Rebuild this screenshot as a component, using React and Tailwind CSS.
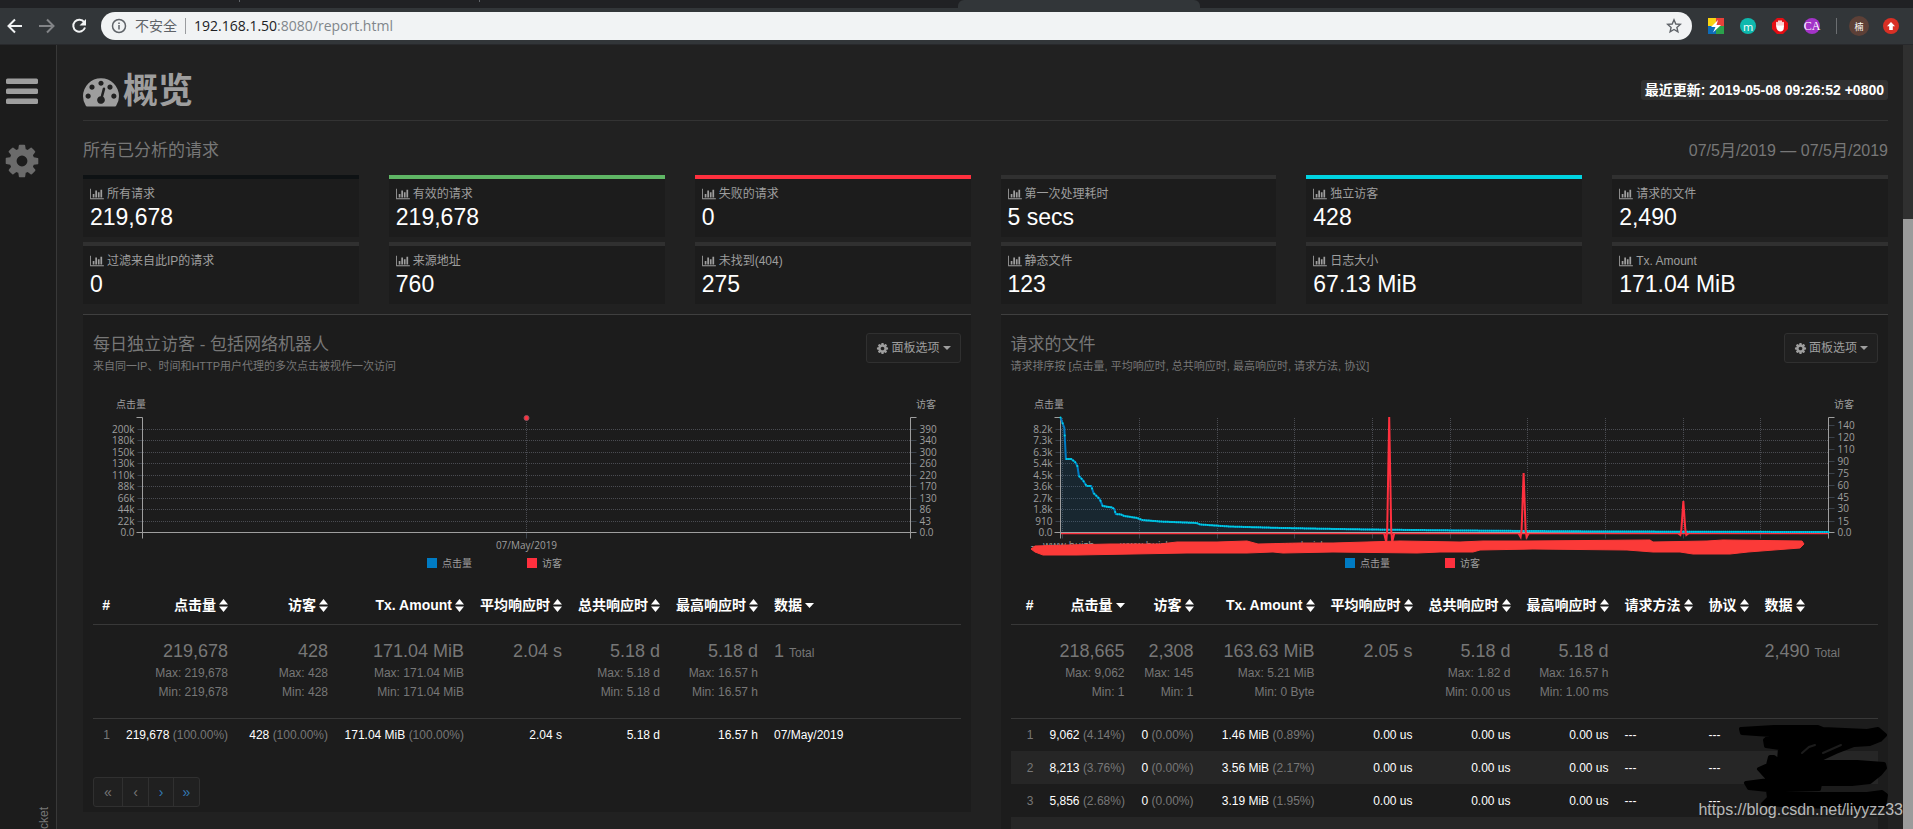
import { useEffect, useRef, useState } from 'react'

const STATS = [
  { label: '所有请求', value: '219,678', border: 'border-[#0e1214]' },
  { label: '有效的请求', value: '219,678', border: 'border-[#5fb665]' },
  { label: '失败的请求', value: '0', border: 'border-[#ff303e]' },
  { label: '第一次处理耗时', value: '5 secs', border: 'border-[#303030]' },
  { label: '独立访客', value: '428', border: 'border-[#00d4e1]' },
  { label: '请求的文件', value: '2,490', border: 'border-[#303030]' },
  { label: '过滤来自此IP的请求', value: '0', border: 'border-[#303030]' },
  { label: '来源地址', value: '760', border: 'border-[#303030]' },
  { label: '未找到(404)', value: '275', border: 'border-[#303030]' },
  { label: '静态文件', value: '123', border: 'border-[#303030]' },
  { label: '日志大小', value: '67.13 MiB', border: 'border-[#303030]' },
  { label: 'Tx. Amount', value: '171.04 MiB', border: 'border-[#303030]' },
]

const VISITORS_COLS = [
  { label: '#', width: 'w-[25px]' },
  { label: '点击量', width: 'w-[118px]', sort: 'both' },
  { label: '访客', width: 'w-[100px]', sort: 'both' },
  { label: 'Tx. Amount', width: 'w-[136px]', sort: 'both' },
  { label: '平均响应时', width: 'w-[98px]', sort: 'both' },
  { label: '总共响应时', width: 'w-[98px]', sort: 'both' },
  { label: '最高响应时', width: 'w-[98px]', sort: 'both' },
  { label: '数据', sort: 'desc', left: true },
]
const VISITORS_META = [
  null,
  ['219,678', 'Max: 219,678', 'Min: 219,678'],
  ['428', 'Max: 428', 'Min: 428'],
  ['171.04 MiB', 'Max: 171.04 MiB', 'Min: 171.04 MiB'],
  ['2.04 s'],
  ['5.18 d', 'Max: 5.18 d', 'Min: 5.18 d'],
  ['5.18 d', 'Max: 16.57 h', 'Min: 16.57 h'],
  { total: '1' },
]
const VISITORS_ROWS = [
  ['1', ['219,678', '(100.00%)'], ['428', '(100.00%)'], ['171.04 MiB', '(100.00%)'], ['2.04 s'], ['5.18 d'], ['16.57 h'], ['07/May/2019']],
]

const FILES_COLS = [
  { label: '#', width: 'w-[31px]' },
  { label: '点击量', width: 'w-[91px]', sort: 'desc' },
  { label: '访客', width: 'w-[69px]', sort: 'both' },
  { label: 'Tx. Amount', width: 'w-[121px]', sort: 'both' },
  { label: '平均响应时', width: 'w-[98px]', sort: 'both' },
  { label: '总共响应时', width: 'w-[98px]', sort: 'both' },
  { label: '最高响应时', width: 'w-[98px]', sort: 'both' },
  { label: '请求方法', width: 'w-[84px]', sort: 'both', left: true },
  { label: '协议', width: 'w-[56px]', sort: 'both', left: true },
  { label: '数据', sort: 'both', left: true },
]
const FILES_META = [
  null,
  ['218,665', 'Max: 9,062', 'Min: 1'],
  ['2,308', 'Max: 145', 'Min: 1'],
  ['163.63 MiB', 'Max: 5.21 MiB', 'Min: 0 Byte'],
  ['2.05 s'],
  ['5.18 d', 'Max: 1.82 d', 'Min: 0.00 us'],
  ['5.18 d', 'Max: 16.57 h', 'Min: 1.00 ms'],
  null,
  null,
  { total: '2,490' },
]
const FILES_ROWS = [
  ['1', ['9,062', '(4.14%)'], ['0', '(0.00%)'], ['1.46 MiB', '(0.89%)'], ['0.00 us'], ['0.00 us'], ['0.00 us'], ['---'], ['---'], ['']],
  ['2', ['8,213', '(3.76%)'], ['0', '(0.00%)'], ['3.56 MiB', '(2.17%)'], ['0.00 us'], ['0.00 us'], ['0.00 us'], ['---'], ['---'], ['']],
  ['3', ['5,856', '(2.68%)'], ['0', '(0.00%)'], ['3.19 MiB', '(1.95%)'], ['0.00 us'], ['0.00 us'], ['0.00 us'], ['---'], ['---'], ['']],
  ['', [''], [''], [''], [''], [''], [''], [''], [''], ['']],
]

// Chart geometry, shared by both panels
const TOP = 27.5
const BOTTOM = 142.5
const GRID_Y = [39.5, 50.5, 62.5, 73.5, 85.5, 96.5, 108.5, 119.5, 131.5]

const VISITORS_CHART = {
  left: ['200k', '180k', '150k', '130k', '110k', '88k', '66k', '44k', '22k'],
  right: ['390', '340', '300', '260', '220', '170', '130', '86', '43'],
  rightY: GRID_Y,
  ticks: [0.5],
}
const FILES_CHART = {
  left: ['8.2k', '7.3k', '6.3k', '5.4k', '4.5k', '3.6k', '2.7k', '1.8k', '910'],
  right: ['140', '120', '110', '90', '75', '60', '45', '30', '15'],
  rightY: [35.5, 47.5, 59.5, 71.5, 83.5, 95.5, 107.5, 118.5, 131.5],
  ticks: [0.002, 0.103, 0.204, 0.305, 0.406, 0.508, 0.608, 0.709, 0.811, 0.911],
}

// [x fraction of the plot, y]
const HITS = [
  [0, 27.5], [0.005, 38], [0.007, 69], [0.014, 69], [0.019, 72], [0.022, 76], [0.024, 86], [0.029, 90],
  [0.034, 96], [0.04, 96], [0.043, 103], [0.051, 109], [0.055, 116], [0.067, 117.5], [0.07, 119],
  [0.072, 124], [0.079, 124.5], [0.083, 126], [0.1, 128], [0.106, 130], [0.13, 131.5], [0.177, 133],
  [0.182, 134.5], [0.22, 136.5], [0.29, 138], [0.36, 139], [0.4, 139.5], [0.52, 140.5], [0.7, 141.5], [1, 142],
]
const SPIKES = [
  { x: 0.428, y: 27, dip: 152 },
  { x: 0.603, y: 83, dip: 147 },
  { x: 0.811, y: 111, dip: 145 },
]

function hitAt(f) {
  const i = Math.max(1, HITS.findIndex((p) => p[0] >= f))
  const [x0, y0] = HITS[i - 1]
  const [x1, y1] = HITS[i]
  return y0 + ((y1 - y0) * (f - x0)) / (x1 - x0)
}

const COG =
  'M1152 896q0-106-75-181t-181-75-181 75-75 181 75 181 181 75 181-75 75-181zm512-109v222q0 12-8 23t-20 13l-185 28q-19 54-39 91 35 50 107 138 10 12 10 25t-9 23q-27 37-99 108t-94 71q-12 0-26-9l-138-108q-44 23-91 38-16 136-29 186-7 28-36 28h-222q-14 0-24.5-8.5t-11.5-21.5l-28-184q-49-16-90-37l-141 107q-10 9-25 9-14 0-25-11-126-114-165-168-7-10-7-23 0-12 8-23 15-21 51-66.5t54-70.5q-27-50-41-99l-183-27q-13-2-21-12.5t-8-23.5v-222q0-12 8-23t19-13l186-28q14-46 39-92-40-57-107-138-10-12-10-24 0-10 9-23 26-36 98.5-107.5t94.5-71.5q13 0 26 10l138 107q44-23 91-38 16-136 29-186 7-28 36-28h222q14 0 24.5 8.5t11.5 21.5l28 184q49 16 90 37l142-107q9-9 24-9 13 0 25 10 129 119 165 170 7 8 7 22 0 12-8 23-15 21-51 66.5t-54 70.5q26 50 41 98l183 28q13 2 21 12.5t8 23.5z'

const GAUGE =
  'M384 1152q0-53-37.5-90.5t-90.5-37.5-90.5 37.5-37.5 90.5 37.5 90.5 90.5 37.5 90.5-37.5 37.5-90.5zm192-448q0-53-37.5-90.5t-90.5-37.5-90.5 37.5-37.5 90.5 37.5 90.5 90.5 37.5 90.5-37.5 37.5-90.5zm428 481l101-382q6-26-7.5-48.5t-38.5-29.5-48 6.5-30 39.5l-101 382q-60 5-107 43.5t-63 98.5q-20 77 20 146t117 89 146-20 89-117q16-60-6-117t-72-91zm660-33q0-53-37.5-90.5t-90.5-37.5-90.5 37.5-37.5 90.5 37.5 90.5 90.5 37.5 90.5-37.5 37.5-90.5zm-640-640q0-53-37.5-90.5t-90.5-37.5-90.5 37.5-37.5 90.5 37.5 90.5 90.5 37.5 90.5-37.5 37.5-90.5zm448 192q0-53-37.5-90.5t-90.5-37.5-90.5 37.5-37.5 90.5 37.5 90.5 90.5 37.5 90.5-37.5 37.5-90.5zm320 448q0 261-141 483-19 29-54 29h-1402q-35 0-54-29-141-221-141-483 0-182 71-348t191-286 286-191 348-71 348 71 286 191 191 286 71 348z'

const BAR_CHART =
  'M640 896v512h-256v-512h256zm384-512v1024h-256v-1024h256zm1024 1152v128h-2048v-1536h128v1408h1920zm-640-896v768h-256v-768h256zm384-384v1152h-256v-1152h256z'

function Cog({ className }) {
  return (
    <svg viewBox="0 0 1792 1792" className={className} fill="currentColor" aria-hidden="true">
      <path d={COG} />
    </svg>
  )
}

function SortIcon({ kind }) {
  return (
    <svg viewBox="0 0 9 13" className="h-[13px] w-[9px] shrink-0" fill="currentColor" aria-hidden="true">
      {kind === 'both' ? (
        <>
          <path d="M4.5 0 9 5.5H0z" />
          <path d="M0 7.5h9L4.5 13z" />
        </>
      ) : (
        <path d="M0 4h9L4.5 9z" />
      )}
    </svg>
  )
}

function Toolbar() {
  return (
    <div className="shrink-0 border-b border-[#28292c] bg-[#323639] font-['Open_Sans','Noto_Sans_CJK_SC',sans-serif]">
      <div className="flex h-2 bg-[#202124]">
        <div className="ml-[239px] h-[2px] w-px bg-[#5f6368]" />
        <div className="ml-[239px] h-[2px] w-px bg-[#5f6368]" />
        <div className="ml-[478px] h-2 w-[242px] rounded-t-md bg-[#323639]" />
      </div>
      <div className="flex h-9 items-center">
        <div className="flex w-[101px] shrink-0 items-center gap-4 pl-[7px]">
          <button aria-label="后退" className="text-[#f1f3f4]">
            <svg viewBox="0 0 16 16" className="size-4" fill="none" stroke="currentColor" strokeWidth="2">
              <path d="M15 8H2M8 1.5 1.5 8 8 14.5" />
            </svg>
          </button>
          <button aria-label="前进" className="text-[#828487]">
            <svg viewBox="0 0 16 16" className="size-4" fill="none" stroke="currentColor" strokeWidth="2">
              <path d="M0 8h13M8 1.5 14.5 8 8 14.5" />
            </svg>
          </button>
          <button aria-label="重新加载" className="text-[#f1f3f4]">
            <svg viewBox="0 0 16 16" className="size-4" fill="none" stroke="currentColor" strokeWidth="2">
              <path d="M13.2 4.2A6 6 0 1 0 14 9.5" />
              <path d="M15 1v6.500H8.500z" fill="currentColor" stroke="none" />
            </svg>
          </button>
        </div>
        <div className="flex h-7 min-w-0 flex-1 items-center rounded-full bg-[#f1f3f4] pr-[10px] pl-[10px] text-[14px] leading-5">
          <svg viewBox="0 0 16 16" className="size-4 shrink-0 text-[#5f6368]" fill="none" stroke="currentColor" strokeWidth="1.5">
            <circle cx="8" cy="8" r="6.500" />
            <path d="M8 7v4.500M8 4.500v1.600" />
          </svg>
          <span className="ml-2 text-[#5f6368]">不安全</span>
          <span className="mx-2 h-4 w-px bg-[#9a9c9f]" />
          <span className="text-[#80868b]">
            <span className="text-[#202124]">192.168.1.50</span>:8080/report.html
          </span>
          <button aria-label="收藏" className="ml-auto text-[#5f6368]">
            <svg viewBox="0 0 16 16" className="size-4" fill="none" stroke="currentColor" strokeWidth="1.400">
              <path d="M8 1.800 9.800 6l4.500.4-3.400 3 1 4.400L8 11.500l-3.900 2.300 1-4.400-3.400-3L6.200 6z" />
            </svg>
          </button>
        </div>
        <div className="flex shrink-0 items-center gap-4 pr-[14px] pl-4">
          <svg viewBox="0 0 16 16" className="size-4">
            <path d="M0 0h8v8H0z" fill="#f9d413" />
            <path d="M8 0h8v8H8z" fill="#e8413a" />
            <path d="M0 8h8v8H0z" fill="#0d6cb8" />
            <path d="M8 8h8v8H8z" fill="#2ba24c" />
            <path d="M10 2 3 9h4.500L5 14.500 13 7H8.500z" fill="#fff" />
          </svg>
          <span className="flex size-4 items-center justify-center rounded-full bg-[#0fb8ad] text-[11px] leading-none text-white">m</span>
          <svg viewBox="0 0 16 16" className="size-4">
            <path d="M5 0h6l5 5v6l-5 5H5l-5-5V5z" fill="#e30d13" />
            <path d="M5 8V4.500M7 7.500V3M9 7.500V3M11 8.500V4.500" stroke="#fff" strokeWidth="1.600" strokeLinecap="round" />
            <path d="M4.300 7.500h7.500V10c0 2-1.300 3.500-3.500 3.500S4.300 11 4.300 9z" fill="#fff" />
          </svg>
          <span className="flex size-4 items-center justify-center rounded-full bg-[#a333c8] font-['Liberation_Serif',serif] text-[12px] leading-none text-white">CA</span>
          <span className="h-4 w-px bg-[#6b6e71]" />
          <span className="-ml-1 flex size-5 items-center justify-center rounded-full bg-[#5d4037] text-[9px] leading-none text-white">楠</span>
          <svg viewBox="0 0 16 16" className="-ml-[2px] size-4">
            <circle cx="8" cy="8" r="8" fill="#d93025" />
            <path d="M8 4 12 8.300H9.800V12H6.200V8.300H4z" fill="#fff" />
          </svg>
        </div>
      </div>
    </div>
  )
}

function Sidebar() {
  return (
    <nav className="flex w-[57px] shrink-0 flex-col overflow-hidden border-r border-[#383838] bg-[#1c1c1c]">
      <button aria-label="菜单" className="mt-[33px] ml-[6px] w-8 text-[#9e9e9e]">
        <svg viewBox="0 0 32 27" className="h-[27px] w-8" fill="currentColor">
          <rect y="0.500" width="32" height="5.500" rx="1.500" />
          <rect y="10.500" width="32" height="5.500" rx="1.500" />
          <rect y="20.500" width="32" height="5.500" rx="1.500" />
        </svg>
      </button>
      <button aria-label="设置" className="mt-[37px] ml-[3px] w-[38px] text-[#6b6b6b]">
        <Cog className="size-[38px]" />
      </button>
      <span className="mt-auto ml-[35px] rotate-180 self-start text-[12px] leading-[18px] text-[#777] [writing-mode:vertical-rl]">cket</span>
    </nav>
  )
}

function StatCard({ label, value, border }) {
  return (
    <div className={`border-t-4 bg-[#1c1c1c] px-[7px] pt-[5px] pb-[7px] ${border}`}>
      <div className="flex h-5 items-center gap-[3px] text-[12px] text-[#9e9e9e]">
        <svg viewBox="0 0 2048 1792" className="h-3 w-[14px]" fill="currentColor" aria-hidden="true">
          <path d={BAR_CHART} />
        </svg>
        {label}
      </div>
      <div className="text-[23px] leading-[26px] text-white">{value}</div>
    </div>
  )
}

function Chart({ config, files = false }) {
  const ref = useRef(null)
  const [width, setWidth] = useState(868)

  useEffect(() => {
    const ro = new ResizeObserver(([entry]) => setWidth(Math.round(entry.contentRect.width)))
    ro.observe(ref.current)
    return () => ro.disconnect()
  }, [])

  const x0 = 49.5
  const x1 = width - 50.5
  const px = (f) => x0 + f * (x1 - x0)
  const tickX = (f) => Math.floor(px(f)) + 0.5
  const mid = tickX(0.5)
  const line = HITS.map(([f, y]) => `${px(f)},${y}`).join(' ')
  const dots = Array.from({ length: 366 }, (_, i) => i / 365)

  return (
    <div ref={ref} className="h-[185px] overflow-hidden">
      <svg
        width={width}
        height="185"
        className="block fill-[#9e9e9e] font-['Open_Sans','Noto_Sans_CJK_SC',sans-serif] text-[10px]"
      >
        <g stroke="#4a4c52" strokeDasharray="1 1">
          {GRID_Y.map((y) => <line key={y} x1={x0 + 0.5} x2={x1} y1={y} y2={y} />)}
          {config.ticks.map((f) => <line key={f} x1={tickX(f)} x2={tickX(f)} y1={TOP + 0.5} y2={BOTTOM} />)}
        </g>
        <g stroke="#3b424b">
          {GRID_Y.map((y) => <line key={y} x1={x0 - 5} x2={x0} y1={y} y2={y} />)}
          {config.rightY.map((y) => <line key={y} x1={x1} x2={x1 + 6} y1={y} y2={y} />)}
          {config.ticks.map((f) => <line key={f} x1={tickX(f)} x2={tickX(f)} y1={BOTTOM} y2={BOTTOM + 6} />)}
        </g>

        {files && (
          <>
            <polygon points={`${line} ${x1},${BOTTOM} ${x0},${BOTTOM}`} fill="#007bc3" fillOpacity="0.12" />
            <line x1={x0} x2={x1} y1={BOTTOM + 1} y2={BOTTOM + 1} stroke="#ff303e" strokeWidth="1.500" />
          </>
        )}

        <g fill="none" stroke="#9e9e9e">
          <path d={`M${x0 - 6} ${TOP}H${x0}V${BOTTOM + 6}`} />
          <path d={`M${x1 + 6} ${TOP}H${x1}V${BOTTOM + 6}`} />
          <path d={`M${x0 - 6} ${BOTTOM}H${x1 + 6}`} />
        </g>

        {files ? (
          <>
            <polyline points={line} fill="none" stroke="#007bc3" strokeWidth="2" />
            <g fill="#00d4e1">
              {dots.map((f) => <circle key={f} cx={px(f)} cy={hitAt(f)} r="1" />)}
            </g>
            {SPIKES.map(({ x, y, dip }) => (
              <path
                key={x}
                d={`M${px(x) - 5} 143.500L${px(x) - 3} ${dip}L${px(x) - 2} 140L${px(x)} ${y}L${px(x) + 2} 140L${px(x) + 3} ${dip}L${px(x) + 5} 143.500`}
                fill="none"
                stroke="#ff303e"
                strokeWidth="2"
              />
            ))}
            <g textAnchor="middle">
              {[0.002, 0.103, 0.305].map((f) => <text key={f} x={tickX(f)} y="159">--- www.huizh</text>)}
            </g>
            <polygon
              points="20,159 24,156 56,155 99,154 149,154 166,152 206,152 236,151 247,154 289,153 322,153 389,151 449,152 472,151 516,151 639,150 642,152 696,151 712,150 791,151 793,154 789,158 776,159 737,162 719,164 682,164 669,162 642,162 616,160 522,159 469,160 462,162 429,162 406,163 322,162 272,163 262,162 236,163 176,163 122,164 66,165 32,165 24,162"
              fill="#fb3a38"
              stroke="#fb3a38"
              strokeLinejoin="round"
            />
          </>
        ) : (
          <>
            <circle cx={mid} cy="28" r="2.500" fill="#ff303e" stroke="#8a5560" />
            <text x={mid} y="159" textAnchor="middle">07/May/2019</text>
          </>
        )}

        <text x="23" y="18">点击量</text>
        <text x={x1 + 5.5} y="18">访客</text>
        <g textAnchor="end">
          {config.left.map((t, i) => <text key={t} x={x0 - 8} y={GRID_Y[i] + 3.5}>{t}</text>)}
          <text x={x0 - 8} y={BOTTOM + 3.5}>0.0</text>
        </g>
        {config.right.map((t, i) => <text key={t} x={x1 + 9} y={config.rightY[i] + 3.5}>{t}</text>)}
        <text x={x1 + 9} y={BOTTOM + 3.5}>0.0</text>

        <rect x={mid - 99.5} y="168" width="10" height="10" fill="#007bc3" />
        <text x={mid - 84.5} y="177">点击量</text>
        <rect x={mid + 0.5} y="168" width="10" height="10" fill="#ff303e" />
        <text x={mid + 15.5} y="177">访客</text>
      </svg>
    </div>
  )
}

function MetaCell({ meta }) {
  if (!meta) return null
  if (meta.total) {
    return (
      <div className="text-[18px] leading-[26px]">
        {meta.total} <span className="text-[12px]">Total</span>
      </div>
    )
  }
  const [big, ...rest] = meta
  return (
    <>
      <div className="text-[18px] leading-[26px]">{big}</div>
      {rest.map((t) => <div key={t} className="leading-[19px]">{t}</div>)}
    </>
  )
}

function DataTable({ cols, meta, rows }) {
  return (
    <table className="mt-[13px] w-full table-fixed border-collapse text-[12px] whitespace-nowrap">
      <colgroup>
        {cols.map((c) => <col key={c.label} className={c.width} />)}
      </colgroup>
      <thead>
        <tr className="h-9 border-b border-[#383838] text-[14px] text-white">
          {cols.map((c) => (
            <th key={c.label} className="p-0">
              <div className={`flex items-center gap-[3px] ${c.left ? 'pl-2' : 'justify-end pr-2'}`}>
                {c.label}
                {c.sort && <SortIcon kind={c.sort} />}
              </div>
            </th>
          ))}
        </tr>
      </thead>
      <tbody>
        <tr className="border-b border-[#383838] text-[#777]">
          {cols.map((c, i) => (
            <td key={c.label} className={`px-2 pt-[13px] pb-4 align-top ${c.left ? '' : 'text-right'}`}>
              <MetaCell meta={meta[i]} />
            </td>
          ))}
        </tr>
        {rows.map(([num, ...cells]) => (
          <tr key={num} className="h-[33px] odd:bg-[#262626]">
            <td className="px-2 text-right text-[#777]">{num}</td>
            {cells.map(([value, pct], i) => (
              <td key={i} className={`px-2 text-white ${cols[i + 1].left ? '' : 'text-right'}`}>
                {value}
                {pct && <span className="text-[#777]"> {pct}</span>}
              </td>
            ))}
          </tr>
        ))}
      </tbody>
    </table>
  )
}

function Panel({ title, sub, children }) {
  return (
    <section className="relative self-start border-t border-[#3f3f3f] bg-[#1c1c1c] px-[10px] pt-[18px] pb-[5px]">
      <div className="flex items-start justify-between pb-[15px] text-[#777]">
        <div>
          <h2 className="text-[17px] leading-6">{title}</h2>
          <p className="text-[11px] leading-[18px]">{sub}</p>
        </div>
        <button className="flex h-[30px] items-center gap-[2px] rounded-[3px] border border-[#303030] bg-[#202020] px-[9px] text-[12px] text-[#9e9e9e]">
          <Cog className="size-[13px]" />
          面板选项
          <svg viewBox="0 0 8 4" className="ml-px h-1 w-2" fill="currentColor" aria-hidden="true">
            <path d="M0 0h8L4 4z" />
          </svg>
        </button>
      </div>
      {children}
    </section>
  )
}

function Pagination() {
  const base = 'h-7 border-[#303030] text-center text-[14px]'
  return (
    <div className="mt-[26px] inline-flex rounded-[3px] border border-[#303030] bg-[#202020] align-top">
      <button className={`${base} w-7 text-[#777]`}>«</button>
      <button className={`${base} w-[26px] border-l text-[#777]`}>‹</button>
      <button className={`${base} w-[25px] border-l text-[#337ab7]`}>›</button>
      <button className={`${base} w-[26px] border-l text-[#337ab7]`}>»</button>
    </div>
  )
}

// Marker strokes over the first data rows
function Scribble() {
  return (
    <svg viewBox="0 0 152 88" className="absolute top-[408px] -right-px h-[88px] w-[152px]" aria-hidden="true">
      <path
        d="M4 6 37 4 81 4 86 6 130 8 141 6 148 12 143 17 133 21 117 22 99 29 84 36 76 39 120 39 147 41 148 45 143 51 133 59 115 61 83 61 82 66 47 67 50 71 130 71 145 69 149 72 147 84 90 84 26 81 32 75 31 67 12 65 9 60 32 57 22 46 31 42 33 34 37 34 42 38 43 25 29 23 28 17 34 12 5 10z"
        fill="#000"
        stroke="#000"
        strokeWidth="4"
        strokeLinejoin="round"
      />
      <path d="M65 30 72 24 78 22M86 30 104 22" stroke="#1c1c1c" strokeWidth="2" fill="none" strokeLinecap="round" />
    </svg>
  )
}

export default function App() {
  return (
    <div className="flex h-screen flex-col overflow-hidden bg-[#212121] font-['Liberation_Sans','Noto_Sans_CJK_SC',sans-serif]">
      <Toolbar />
      <div className="relative flex min-h-0 flex-1">
        <Sidebar />
        <main className="min-w-0 flex-1 overflow-hidden pr-[15px] pl-[26px]">
          <header className="flex h-[76px] items-center justify-between border-b border-[#333] pt-[14px]">
            <h1 className="flex items-center gap-1 pt-[2px] text-[35px] leading-none font-bold text-[#9e9e9e]">
              <svg viewBox="0 0 1792 1792" className="size-9" fill="currentColor" aria-hidden="true">
                <path d={GAUGE} />
              </svg>
              概览
            </h1>
            <span className="rounded-[3px] bg-[#303030] px-1 text-[14px] leading-5 font-bold text-white">
              最近更新: 2019-05-08 09:26:52 +0800
            </span>
          </header>

          <div className="mt-4 mb-[10px] flex justify-between leading-7 text-[#777]">
            <h2 className="text-[17px]">所有已分析的请求</h2>
            <span className="text-[16px]">07/5月/2019 — 07/5月/2019</span>
          </div>

          <div className="grid grid-cols-6 gap-x-[30px] gap-y-[5px]">
            {STATS.map((s) => <StatCard key={s.label} {...s} />)}
          </div>

          <div className="mt-[10px] grid grid-cols-2 gap-x-[30px]">
            <Panel title="每日独立访客 - 包括网络机器人" sub="来自同一IP、时间和HTTP用户代理的多次点击被视作一次访问">
              <Chart config={VISITORS_CHART} />
              <DataTable cols={VISITORS_COLS} meta={VISITORS_META} rows={VISITORS_ROWS} />
              <Pagination />
            </Panel>
            <Panel title="请求的文件" sub="请求排序按 [点击量, 平均响应时, 总共响应时, 最高响应时, 请求方法, 协议]">
              <Chart config={FILES_CHART} files />
              <DataTable cols={FILES_COLS} meta={FILES_META} rows={FILES_ROWS} />
              <Scribble />
            </Panel>
          </div>
        </main>
        <div className="w-[10px] shrink-0 bg-[#303030] pt-[174px]">
          <div className="h-full bg-[#9b9b9b]" />
        </div>
        <span className="absolute right-[10px] bottom-[9px] text-[16px] leading-5 text-white/70">https://blog.csdn.net/liyyzz33</span>
      </div>
    </div>
  )
}
